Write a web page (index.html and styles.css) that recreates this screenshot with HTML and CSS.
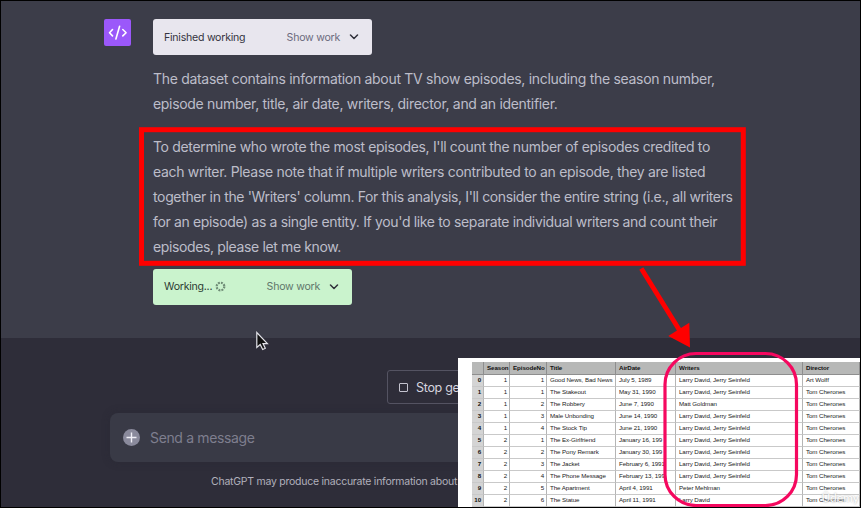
FILE: index.html
```html
<!DOCTYPE html>
<html lang="en">
<head>
<meta charset="utf-8">
<title>Code Interpreter chat</title>
<link rel="stylesheet" href="styles.css">
</head>
<body>
<div class="window">
  <main class="chat">
    <div class="avatar">
      <svg width="27" height="27" viewBox="0 0 27 27" fill="none" stroke="#fff" stroke-width="1.600" stroke-linecap="round" stroke-linejoin="round"><path d="M8.500 10.500 5.500 13.700l3 3.200M18.800 10.500l3.300 3.200-3.300 3.200M15.600 7.300l-3.700 12.600"/></svg>
    </div>
    <div class="message">
      <div class="status">
        <span>Finished working</span>
        <span class="toggle">Show work</span>
        <svg class="chevron" width="10" height="6" viewBox="0 0 10 6"><path d="M1.500 1 5 4.500 8.500 1"/></svg>
      </div>
      <p class="intro"><span class="l1">The dataset contains information about TV show episodes, including the season number,</span><br><span class="l2">episode number, title, air date, writers, director, and an identifier.</span></p>
      <p class="detail"><span class="l3">To determine who wrote the most episodes, I'll count the number of episodes credited to</span><br><span class="l4">each writer. Please note that if multiple writers contributed to an episode, they are listed</span><br><span class="l5">together in the 'Writers' column. For this analysis, I'll consider the entire string (i.e., all writers</span><br><span class="l6">for an episode) as a single entity. If you'd like to separate individual writers and count their</span><br><span class="l7">episodes, please let me know.</span></p>
      <div class="status working">
        <span>Working...</span>
        <svg class="spinner" width="11" height="11" viewBox="0 0 11 11"><circle cx="5.500" cy="5.500" r="3.800"/></svg>
        <span class="toggle">Show work</span>
        <svg class="chevron" width="10" height="6" viewBox="0 0 10 6"><path d="M1.500 1 5 4.500 8.500 1"/></svg>
      </div>
    </div>
  </main>
  <footer class="composer">
    <div class="stop"><i class="square"></i><span>Stop ge</span></div>
    <div class="input">
      <svg width="17" height="17" viewBox="0 0 17 17"><circle cx="8.500" cy="8.500" r="8.500" fill="#8a8a9c"/><path d="M8.500 3.500v10M3.500 8.500h10" stroke="#f0eff6" stroke-width="1.400"/></svg>
      <span>Send a message</span>
    </div>
    <p class="note">ChatGPT may produce inaccurate information about</p>
  </footer>
  <section class="sheet">
    <table>
      <colgroup><col class="c0"><col class="c1"><col class="c2"><col class="c3"><col class="c4"><col class="c5"><col class="c6"></colgroup>
      <tr class="head"><th></th><th>Season</th><th>EpisodeNo</th><th>Title</th><th>AirDate</th><th>Writers</th><th>Director</th></tr>
      <tr><th>0</th><td>1</td><td>1</td><td>Good News, Bad News</td><td>July 5, 1989</td><td>Larry David, Jerry Seinfeld</td><td>Art Wolff</td></tr>
      <tr><th>1</th><td>1</td><td>1</td><td>The Stakeout</td><td>May 31, 1990</td><td>Larry David, Jerry Seinfeld</td><td>Tom Cherones</td></tr>
      <tr><th>2</th><td>1</td><td>2</td><td>The Robbery</td><td>June 7, 1990</td><td>Matt Goldman</td><td>Tom Cherones</td></tr>
      <tr><th>3</th><td>1</td><td>3</td><td>Male Unbonding</td><td>June 14, 1990</td><td>Larry David, Jerry Seinfeld</td><td>Tom Cherones</td></tr>
      <tr><th>4</th><td>1</td><td>4</td><td>The Stock Tip</td><td>June 21, 1990</td><td>Larry David, Jerry Seinfeld</td><td>Tom Cherones</td></tr>
      <tr><th>5</th><td>2</td><td>1</td><td>The Ex-Girlfriend</td><td>January 16, 199</td><td>Larry David, Jerry Seinfeld</td><td>Tom Cherones</td></tr>
      <tr><th>6</th><td>2</td><td>2</td><td>The Pony Remark</td><td>January 30, 199</td><td>Larry David, Jerry Seinfeld</td><td>Tom Cherones</td></tr>
      <tr><th>7</th><td>2</td><td>3</td><td>The Jacket</td><td>February 6, 1991</td><td>Larry David, Jerry Seinfeld</td><td>Tom Cherones</td></tr>
      <tr><th>8</th><td>2</td><td>4</td><td>The Phone Message</td><td>February 13, 199</td><td>Larry David, Jerry Seinfeld</td><td>Tom Cherones</td></tr>
      <tr><th>9</th><td>2</td><td>5</td><td>The Apartment</td><td>April 4, 1991</td><td>Peter Mehlman</td><td>Tom Cherones</td></tr>
      <tr><th>10</th><td>2</td><td>6</td><td>The Statue</td><td>April 11, 1991</td><td>Larry David</td><td>Tom Cherones</td></tr>
    </table>
    <span class="watermark">Ûdemy</span>
  </section>
  <svg class="annotations" width="861" height="508" viewBox="0 0 861 508">
    <rect x="141.500" y="129.700" width="601.800" height="133.600" fill="none" stroke="#f00" stroke-width="5"/>
    <path d="M641.300 268.500 680 331" stroke="#f00" stroke-width="4.800"/>
    <path d="M668.300 336 689.300 322.800 690 347.500Z" fill="#f00"/>
    <rect x="665" y="353.500" width="131.500" height="152" rx="31" fill="none" stroke="#f5085f" stroke-width="3.200"/>
    <path d="M256.800 332.500v15l3.400-3 2.500 5 2.600-1.200-2.300-4.700h4.400Z" fill="#111" stroke="#e4e4ea" stroke-width="1.200"/>
  </svg>
</div>
</body>
</html>
```
FILE: styles.css
```css
* { box-sizing: border-box; }
body { margin: 0; background: #000; font-family: Inter, sans-serif; }
p { margin: 0; }
.window { position: relative; width: 861px; height: 508px; border: 1px solid #000; overflow: hidden; background: #2e2d39; }
.chat { display: flex; height: 337px; padding: 18px 0 0 103px; background: #3c3d49; }
.avatar { width: 27px; height: 27px; border-radius: 2px; background: #9b58fa; flex: none; }
.avatar svg { display: block; }
.message { margin-left: 22px; flex: 1; white-space: nowrap; }
.status { display: flex; align-items: center; width: 219px; height: 36px; padding: 0 13px 0 11px; border-radius: 3px; background: #e8e6ee; color: #35343f; font-size: 10.600px; letter-spacing: -.25px; }
.toggle { margin-left: auto; color: #6c6b7d; }
.chevron { margin-left: 9px; fill: none; stroke: #30303a; stroke-width: 1.500; stroke-linecap: round; stroke-linejoin: round; }
.working { width: 199px; background: #caf3cd; color: #2d3b33; margin-top: 9.600px; }
.working .toggle { color: #61776b; }
.spinner { margin-left: 3px; fill: none; stroke: #6f8c76; stroke-width: 2.200; stroke-dasharray: 1.900 1.080; }
.intro, .detail { font-size: 14px; line-height: 25.100px; color: #bdbdc9; }
.intro { margin-top: 10.500px; }
.detail { margin-top: 18px; }
.l1 { letter-spacing: -.305px; }
.l2 { letter-spacing: -.31px; }
.l3 { letter-spacing: -.34px; }
.l4 { letter-spacing: -.31px; }
.l5 { letter-spacing: -.355px; }
.l6 { letter-spacing: -.345px; }
.l7 { letter-spacing: -.365px; }
.composer { width: 457px; height: 169px; overflow: hidden; padding: 32px 0 0 109px; white-space: nowrap; }
.stop { display: flex; align-items: center; gap: 8px; width: 150px; height: 34px; margin-left: 277px; padding-left: 11px; border: 1px solid #545362; border-radius: 3px; color: #d5d4df; font-size: 12.600px; letter-spacing: -.35px; }
.square { width: 9px; height: 9px; border: 1px solid #c4c3cf; border-radius: 1px; }
.input { display: flex; align-items: center; gap: 10px; width: 640px; height: 49px; margin-top: 9px; padding-left: 13px; border-radius: 8px; background: #393a46; box-shadow: 0 0 8px #25243055; color: #7e7e8e; font-size: 14px; letter-spacing: -.35px; }
.note { margin: 12px 0 0 101px; font-size: 10.500px; line-height: 16px; letter-spacing: -.25px; color: #b1b0bc; }
.sheet { position: absolute; left: 457px; top: 357px; width: 403px; height: 150px; padding: 4px 0 0 14px; background: #fff; overflow: hidden; }
table { width: 388px; table-layout: fixed; border-collapse: separate; border-spacing: 0; font: 6.200px/9px "Liberation Sans", sans-serif; letter-spacing: -.08px; color: #222; }
.c0 { width: 12px; } .c1 { width: 26px; } .c2 { width: 37px; } .c3 { width: 69px; } .c4 { width: 60px; } .c5 { width: 127px; } .c6 { width: 57px; }
th, td { height: 12px; padding: 0 2px 2px 3px; border-right: 1px solid #b5b5b5; border-bottom: 1px solid #c9c9c9; white-space: nowrap; overflow: hidden; text-align: left; }
th { background: #d4d4d4; color: #111; text-align: right; padding-left: 1px; }
.head th { height: 13px; padding: 0 0 2px 3px; background: #b7b8b7; border-color: #8e8e8e; text-align: left; }
td:nth-child(2), td:nth-child(3) { text-align: right; }
.watermark { position: absolute; right: 2px; bottom: 4px; font: 12px/13px Lato, sans-serif; color: #fff; text-shadow: 0 0 2px #888; opacity: .85; }
.annotations { position: absolute; left: -1px; top: -1px; }
```
